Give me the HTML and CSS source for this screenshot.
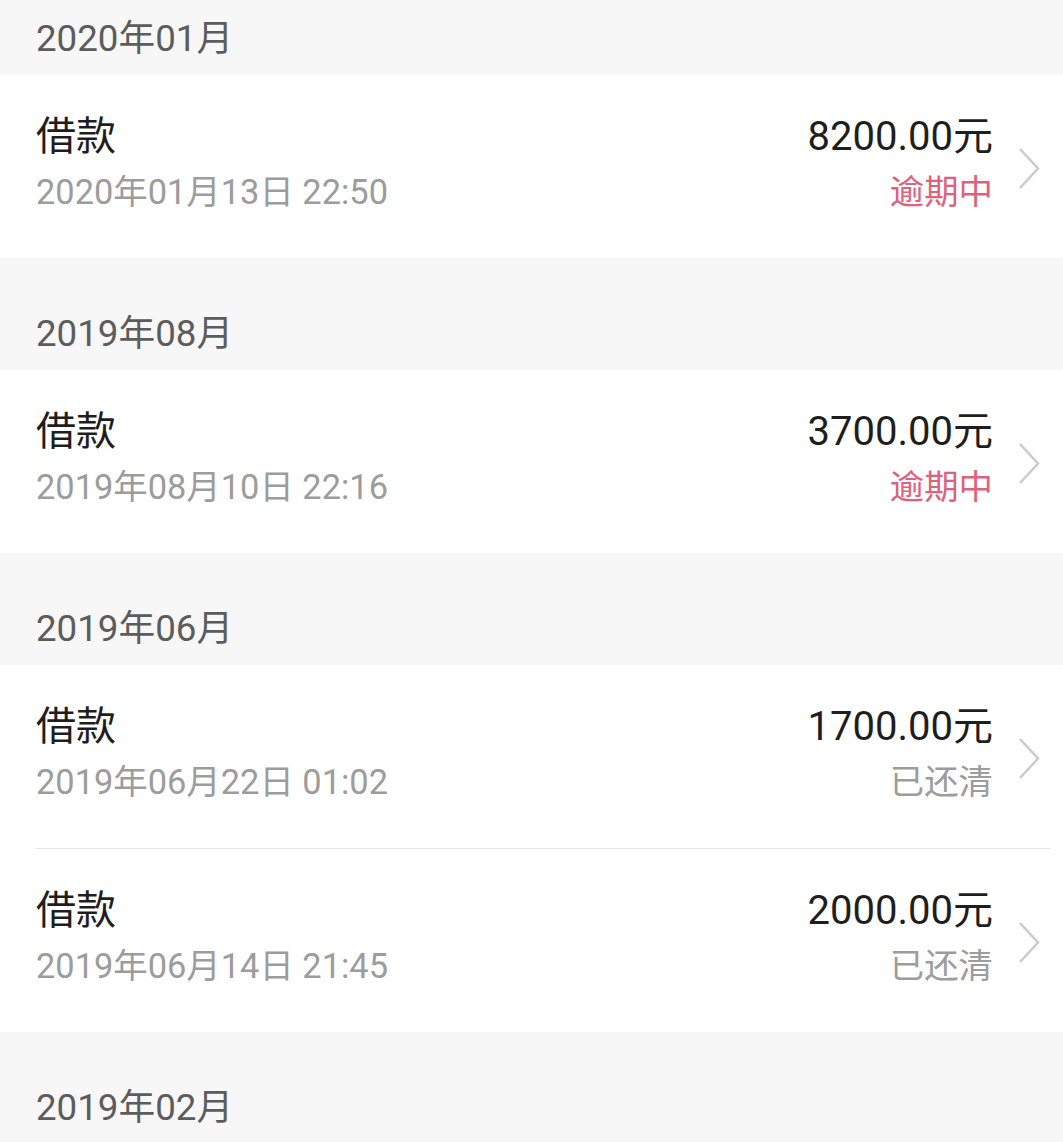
FILE: index.html
```html
<!DOCTYPE html>
<html lang="zh-CN">
<head>
    <meta charset="UTF-8">
    <meta name="viewport" content="width=device-width, initial-scale=1.0">
    <title>借款记录</title>
    <link rel="stylesheet" href="styles.css">
</head>
<body>

    <div class="list">
        <div class="month">2020年01月</div>
        <div class="row">
            <div class="info">
                <div class="title">借款</div>
                <div class="date">2020年01月13日 22:50</div>
            </div>
            <div class="amount-box">
                <div class="amount">8200.00元</div>
                <div class="status overdue">逾期中</div>
            </div>
            <svg class="arrow" viewBox="0 0 22 43"><polyline points="2,2 20,21.5 2,41"/></svg>
        </div>

        <div class="month">2019年08月</div>
        <div class="row">
            <div class="info">
                <div class="title">借款</div>
                <div class="date">2019年08月10日 22:16</div>
            </div>
            <div class="amount-box">
                <div class="amount">3700.00元</div>
                <div class="status overdue">逾期中</div>
            </div>
            <svg class="arrow" viewBox="0 0 22 43"><polyline points="2,2 20,21.5 2,41"/></svg>
        </div>

        <div class="month">2019年06月</div>
        <div class="row">
            <div class="info">
                <div class="title">借款</div>
                <div class="date">2019年06月22日 01:02</div>
            </div>
            <div class="amount-box">
                <div class="amount">1700.00元</div>
                <div class="status">已还清</div>
            </div>
            <svg class="arrow" viewBox="0 0 22 43"><polyline points="2,2 20,21.5 2,41"/></svg>
        </div>
        <div class="divider"></div>
        <div class="row">
            <div class="info">
                <div class="title">借款</div>
                <div class="date">2019年06月14日 21:45</div>
            </div>
            <div class="amount-box">
                <div class="amount">2000.00元</div>
                <div class="status">已还清</div>
            </div>
            <svg class="arrow" viewBox="0 0 22 43"><polyline points="2,2 20,21.5 2,41"/></svg>
        </div>

        <div class="month">2019年02月</div>
    </div>

</body>
</html>
```

FILE: styles.css
```css
body {
    margin: 0;
    font-family: Roboto, "Noto Sans CJK SC", sans-serif;
    background-color: #fff;
    overflow: hidden;
}
.list {
    margin-top: -37px;
}
.month {
    box-sizing: border-box;
    height: 112px;
    padding: 32px 0 0 36px;
    display: flex;
    align-items: center;
    background-color: #f7f7f7;
    color: #5c5c5c;
    font-size: 36.7px;
}
.row {
    box-sizing: border-box;
    height: 183px;
    padding: 38px 23px 0 36px;
    display: flex;
    background-color: #fff;
}
.info {
    flex: 1;
}
.title, .amount {
    font-size: 40px;
    line-height: 48px;
    color: #1e1e1e;
    margin-bottom: 11px;
}
.date, .status {
    font-size: 34.4px;
    line-height: 40px;
    color: #9c9c9c;
}
.amount-box {
    text-align: right;
}
.status.overdue {
    color: #e0617c;
}
.arrow {
    width: 22px;
    height: 43px;
    margin: 34px 0 0 25px;
    fill: none;
    stroke: #cbcbcb;
    stroke-width: 2.5;
}
.divider {
    height: 1px;
    margin: 0 13px 0 36px;
    background-color: #e6e6e6;
}
```
